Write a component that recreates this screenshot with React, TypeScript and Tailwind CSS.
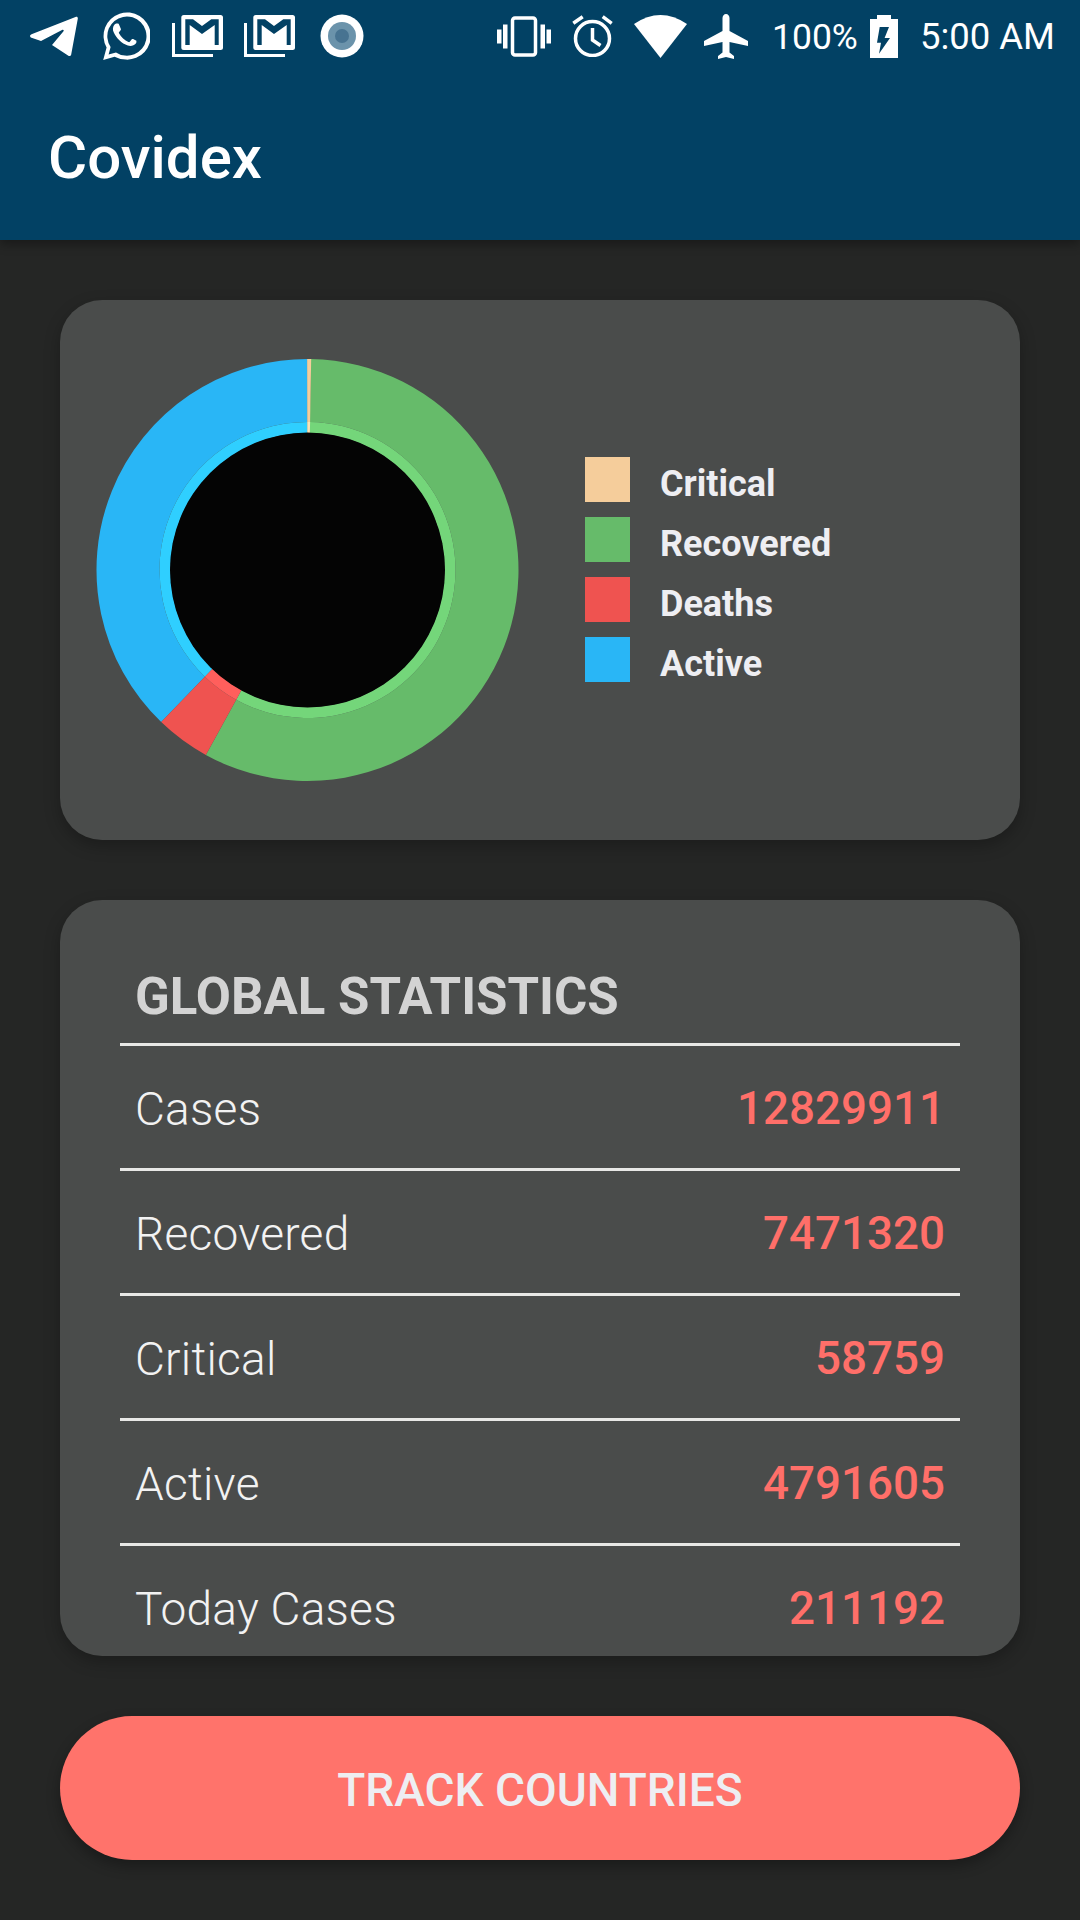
const pt = (r: number, deg: number) => {
  const a = (deg * Math.PI) / 180;
  return [247.5 + r * Math.sin(a), 270 - r * Math.cos(a)];
};
const seg = (r0: number, r1: number, a: number, b: number) => {
  const [x0, y0] = pt(r1, a);
  const [x1, y1] = pt(r1, b);
  const [x2, y2] = pt(r0, b);
  const [x3, y3] = pt(r0, a);
  const large = b - a > 180 ? 1 : 0;
  return `M${x0} ${y0}A${r1} ${r1} 0 ${large} 1 ${x1} ${y1}L${x2} ${y2}A${r0} ${r0} 0 ${large} 0 ${x3} ${y3}Z`;
};
const slices = [
  { a: 223.9, b: 360, c: "#29B6F6", i: "#2FCFFF" },
  { a: 0.9, b: 208.8, c: "#66BB6A", i: "#74D67A" },
  { a: 208.8, b: 223.9, c: "#EF5350", i: "#FF5F5C" },
  { a: -0.1, b: 1.0, c: "#F5CD9B", i: "#FBE3B5" },
];
const legend = [
  ["#F5CD9B", "Critical"],
  ["#66BB6A", "Recovered"],
  ["#EF5350", "Deaths"],
  ["#29B6F6", "Active"],
];
const rows = [
  ["Cases", "12829911"],
  ["Recovered", "7471320"],
  ["Critical", "58759"],
  ["Active", "4791605"],
  ["Today Cases", "211192"],
];
function Mail() {
  return (
    <svg width="52" height="42" viewBox="0 0 52 42" className="block">
      <rect x="9.300" y="0" width="41.700" height="35" rx="2.500" fill="#fff" />
      <path d="M13.300 4.300H21L30 11 39.300 4.300H46.700V30H42.700V10L30 19 17.700 10V30H13.300Z" fill="#024164" />
      <path d="M1.500 8V40.500H41" fill="none" stroke="#fff" strokeWidth="3" />
    </svg>
  );
}
export default function App() {
  return (
    <div className="w-[1080px] h-[1920px] bg-[#252625] overflow-hidden flex flex-col font-['Roboto',sans-serif]">
      <header className="h-[240px] bg-[#024164] shrink-0 shadow-[0_4px_10px_rgba(0,0,0,0.35)] flex flex-col">
        <div className="h-[72px] flex items-center pl-[30px] pr-[25px] text-white text-[36.500px] leading-none">
          <svg width="48" height="41" viewBox="0 0 48 41" className="block">
            <path d="M45.500 1 1.500 18.200C-.5 19.200-.3 21 1.500 21.800L11 25 32 14C33.500 13.300 34.300 14.500 33.300 15.500L22 29 38 39.500C39.500 40.500 41 40 41.200 38.500L47.800 2.800C48 1 47 .4 45.500 1Z" fill="#fff" />
          </svg>
          <svg width="48" height="48" viewBox="0 0 24 24" className="block ml-[24px]">
            <path d="M.6 24l1.700-6.200A11.800 11.800 0 1 1 12 23.800a11.800 11.800 0 0 1-5.700-1.400ZM7 20.200a9.800 9.800 0 1 0-2.700-2.700l-1 3.700Z" fill="#fff" />
            <path d="M17.500 14.500c-.3-.2-1.800-.9-2-1-.3-.1-.5-.1-.7.2l-.9 1.200c-.2.200-.4.200-.7.100-1.800-.8-3.700-2.400-4.700-4.400-.2-.3 0-.5.1-.6l.8-1c.1-.2.1-.4 0-.6l-.9-2.200c-.2-.6-.5-.5-.7-.5h-.6c-.2 0-.5.1-.8.4-1.100 1.100-1.200 2.700-.5 4.200 1.200 2.700 3.900 5.500 7 6.500 1.500.5 3.100.1 4-1 .3-.5.400-1 .300-1.200-.1-.1-.3-.2-.5-.3Z" fill="#fff" />
          </svg>
          <div className="ml-[22px]"><Mail /></div>
          <div className="ml-[20px]"><Mail /></div>
          <svg width="44" height="44" viewBox="0 0 44 44" className="block ml-[24px]">
            <circle cx="22" cy="22" r="21.500" fill="#fff" />
            <circle cx="22" cy="22" r="14" fill="#6B93AB" />
            <circle cx="22" cy="22" r="7" fill="#477391" />
          </svg>
          <div className="flex-1" />
          <svg width="54" height="41" viewBox="0 0 54 41" className="block">
            <rect x="0" y="13.500" width="4.500" height="14" fill="#fff" />
            <rect x="6" y="8.500" width="4.500" height="24" fill="#fff" />
            <rect x="43.500" y="8.500" width="4.500" height="24" fill="#fff" />
            <rect x="49.500" y="13.500" width="4.500" height="14" fill="#fff" />
            <rect x="15.500" y="2" width="23" height="37" rx="2.500" fill="none" stroke="#fff" strokeWidth="3.500" />
          </svg>
          <svg width="41" height="42" viewBox="0 0 41 42" className="block ml-[21px]" fill="none" stroke="#fff" strokeWidth="3.500">
            <circle cx="20.500" cy="23.500" r="17" />
            <path d="M20.500 13V25L28.500 30.500M1.300 8.300 10.700 1.700M30.700 1.700 39.700 8.300" />
          </svg>
          <svg width="53" height="43" viewBox="0 0 53 43" className="block ml-[21px]">
            <path d="M0 9Q26.500-9 53 9L26.500 43Z" fill="#fff" />
          </svg>
          <svg width="44" height="45" viewBox="0 0 44 45" className="block ml-[17px]">
            <path d="M22 0C24 0 25.500 2 25.500 4V17L44 27V32L25.500 28V38.500L30 42V45L22 43 14 45V42L18.500 38.500V28L0 32V27L18.500 17V4C18.500 2 20 0 22 0Z" fill="#fff" />
          </svg>
          <span className="ml-[24px] pt-[3px] text-[35.500px]">100%</span>
          <svg width="28" height="43" viewBox="0 0 28 43" className="block ml-[12px]">
            <path fillRule="evenodd" d="M7 4V0H21V4H28V43H0V4ZM9.700 12 7 27.700H11L9 38.700 20 23H14.600L19 12Z" fill="#fff" />
          </svg>
          <span className="ml-[22px] pt-[3px]">5:00 AM</span>
        </div>
        <div className="flex-1 flex items-center pl-[48px] pt-[4px]">
          <h1 className="text-[60px] leading-none font-medium text-white">Covidex</h1>
        </div>
      </header>
      <main className="flex-1 flex flex-col px-[60px] pt-[60px] pb-[60px] gap-[60px]">
        <section className="h-[540px] rounded-[42px] bg-[#4A4C4B] shadow-[0_6px_16px_rgba(0,0,0,0.25)] flex items-center">
          <svg width="525" height="540" viewBox="0 0 525 540" className="block shrink-0">
            {slices.map((s) => (
              <path key={s.c} d={seg(148, 211, s.a, s.b)} fill={s.c} />
            ))}
            {slices.map((s) => (
              <path key={s.i} d={seg(137, 148, s.a, s.b)} fill={s.i} />
            ))}
            <circle cx="247.500" cy="270" r="137.500" fill="#040404" />
          </svg>
          <ul className="flex flex-col gap-[15px] pb-[1px]">
            {legend.map(([c, t]) => (
              <li key={t} className="h-[45px] flex items-center">
                <span className="w-[45px] h-[45px] block" style={{ backgroundColor: c }} />
                <span className="ml-[30px] pt-[8px] text-[36px] font-bold text-[#EEEEF2] leading-none">{t}</span>
              </li>
            ))}
          </ul>
        </section>
        <section className="h-[756px] rounded-[42px] bg-[#4A4C4B] shadow-[0_6px_16px_rgba(0,0,0,0.25)] overflow-hidden px-[60px]">
          <h2 className="h-[143px] flex items-end pb-[21px] pl-[15px] text-[51px] leading-none font-bold text-[#D3D3D3]">GLOBAL STATISTICS</h2>
          {rows.map(([l, v]) => (
            <div key={l} className="h-[125px] border-t-[3px] border-[#E8E8E6] flex items-center justify-between px-[15px] pt-[4px]">
              <span className="text-[46px] tracking-[0.25px] font-light text-[#F2F2F2] leading-none">{l}</span>
              <span className="text-[45.750px] font-medium text-[#FF6F69] leading-none">{v}</span>
            </div>
          ))}
        </section>
        <button className="h-[144px] rounded-[72px] bg-[#FF736B] shadow-[0_6px_14px_rgba(0,0,0,0.3)] pt-[4px] text-[46px] font-medium text-[#EEEEF2]">TRACK COUNTRIES</button>
      </main>
    </div>
  );
}
